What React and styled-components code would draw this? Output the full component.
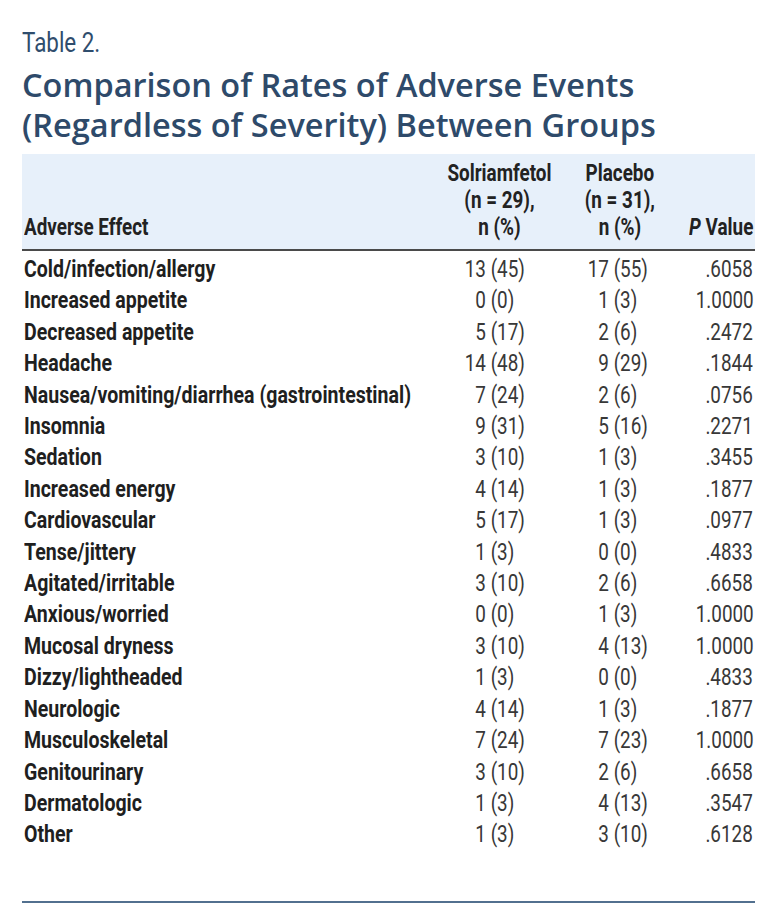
import React from 'react'
import styled, { createGlobalStyle } from 'styled-components'

const rows = [
  ['Cold/infection/allergy', ['13', '45'], ['17', '55'], '.6058'],
  ['Increased appetite', ['0', '0'], ['1', '3'], '1.0000'],
  ['Decreased appetite', ['5', '17'], ['2', '6'], '.2472'],
  ['Headache', ['14', '48'], ['9', '29'], '.1844'],
  ['Nausea/vomiting/diarrhea (gastrointestinal)', ['7', '24'], ['2', '6'], '.0756'],
  ['Insomnia', ['9', '31'], ['5', '16'], '.2271'],
  ['Sedation', ['3', '10'], ['1', '3'], '.3455'],
  ['Increased energy', ['4', '14'], ['1', '3'], '.1877'],
  ['Cardiovascular', ['5', '17'], ['1', '3'], '.0977'],
  ['Tense/jittery', ['1', '3'], ['0', '0'], '.4833'],
  ['Agitated/irritable', ['3', '10'], ['2', '6'], '.6658'],
  ['Anxious/worried', ['0', '0'], ['1', '3'], '1.0000'],
  ['Mucosal dryness', ['3', '10'], ['4', '13'], '1.0000'],
  ['Dizzy/lightheaded', ['1', '3'], ['0', '0'], '.4833'],
  ['Neurologic', ['4', '14'], ['1', '3'], '.1877'],
  ['Musculoskeletal', ['7', '24'], ['7', '23'], '1.0000'],
  ['Genitourinary', ['3', '10'], ['2', '6'], '.6658'],
  ['Dermatologic', ['1', '3'], ['4', '13'], '.3547'],
  ['Other', ['1', '3'], ['3', '10'], '.6128'],
]

function App() {
  return (
    <>
      <GlobalStyle />
      <Page>
        <Label>
          <Squeeze $scale={0.8}>Table 2.</Squeeze>
        </Label>
        <Title>
          <TitleLine>Comparison of Rates of Adverse Events</TitleLine>
          <TitleLine>(Regardless of Severity) Between Groups</TitleLine>
        </Title>
        <Table>
          <colgroup>
            <col style={{ width: 419 }} />
            <col style={{ width: 116 }} />
            <col style={{ width: 126 }} />
            <col style={{ width: 72 }} />
          </colgroup>
          <thead>
            <tr>
              <Th>
                <HeadCell $justify="flex-start">
                  <Squeeze>Adverse Effect</Squeeze>
                </HeadCell>
              </Th>
              <Th>
                <HeadCell>
                  <Squeeze $origin="center">
                    Solriamfetol
                    <br />
                    (n = 29),
                    <br />
                    n (%)
                  </Squeeze>
                </HeadCell>
              </Th>
              <Th>
                <HeadCell>
                  <Squeeze $origin="center">
                    Placebo
                    <br />
                    (n = 31),
                    <br />
                    n (%)
                  </Squeeze>
                </HeadCell>
              </Th>
              <Th>
                <HeadCell $justify="flex-end">
                  <Squeeze $origin="right">
                    <i>P</i> Value
                  </Squeeze>
                </HeadCell>
              </Th>
            </tr>
          </thead>
          <tbody>
            {rows.map(([name, a, b, p]) => (
              <tr key={name}>
                <Name>
                  <Squeeze $scale={0.85}>{name}</Squeeze>
                </Name>
                <Val $pad={22}>
                  <Squeeze>
                    <Count>{a[0]}</Count> ({a[1]})
                  </Squeeze>
                </Val>
                <Val $pad={29}>
                  <Squeeze>
                    <Count>{b[0]}</Count> ({b[1]})
                  </Squeeze>
                </Val>
                <PVal>
                  <Squeeze $origin="right">{p}</Squeeze>
                </PVal>
              </tr>
            ))}
          </tbody>
        </Table>
        <Rule />
      </Page>
    </>
  )
}

export default App

const GlobalStyle = createGlobalStyle`
  body {
    margin: 0;
    background: #fff;
    overflow: hidden;
  }
`

// the reference uses a condensed face; Roboto squeezed horizontally stands in for it
const Squeeze = styled.span`
  display: inline-block;
  white-space: nowrap;
  transform: scaleX(${(p) => p.$scale || 0.82});
  transform-origin: ${(p) => p.$origin || 'left'} center;
`

const Page = styled.div`
  width: 733px;
  padding: 26px 13px 0 22px;
`

const Label = styled.div`
  font-family: Roboto, sans-serif;
  font-size: 28px;
  line-height: 33px;
  color: #2f4d6d;
`

const Title = styled.h1`
  margin: 8px 0 0;
  font-family: "Open Sans", sans-serif;
  font-weight: 600;
  font-size: 32.5px;
  color: #2e4a6a;
`

const TitleLine = styled.div`
  height: 40px;
  line-height: 36px;
  white-space: nowrap;
`

const Table = styled.table`
  margin-top: 7px;
  width: 733px;
  border-collapse: collapse;
  table-layout: fixed;
  font-family: Roboto, sans-serif;
  font-size: 23px;

  thead tr {
    background: #e7f0fa;
    border-bottom: 2px solid #4a4a4a;
  }

  tbody tr:first-child td {
    padding-top: 3px;
  }
`

const Th = styled.th`
  vertical-align: bottom;
  font-weight: 700;
  line-height: 27px;
  color: #222;
  padding: 6px 2px 8px;

  i {
    font-style: italic;
  }
`

const HeadCell = styled.div`
  display: flex;
  justify-content: ${(p) => p.$justify || 'center'};
  text-align: center;
`

const Name = styled.td`
  font-weight: 700;
  color: #1f1f1f;
  line-height: 31.4px;
  padding: 0 2px;
  white-space: nowrap;
`

const Val = styled.td`
  color: #383838;
  line-height: 31.4px;
  padding: 0 0 0 ${(p) => p.$pad}px;
  white-space: nowrap;
`

const Count = styled.span`
  display: inline-block;
  width: 28px;
  text-align: right;
`

const PVal = styled.td`
  color: #383838;
  line-height: 31.4px;
  text-align: right;
  padding: 0 2px 0 0;
`

const Rule = styled.div`
  margin-top: 50px;
  height: 2px;
  background: #52708f;
`
